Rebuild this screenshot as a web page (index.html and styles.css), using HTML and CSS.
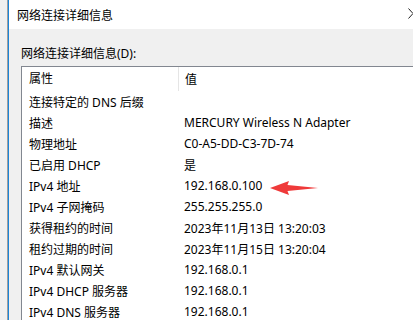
FILE: index.html
```html
<!DOCTYPE html>
<html lang="zh-CN">
<head>
    <meta charset="UTF-8">
    <meta name="viewport" content="width=device-width, initial-scale=1.0">
    <title>网络连接详细信息</title>
    <link rel="stylesheet" href="styles.css">
</head>
<body>
    <div class="side"></div>
    <div class="window">
        <div class="titlebar">
            <span>网络连接详细信息</span>
            <!-- 关闭按钮，只露出一半 -->
            <svg class="close" width="5" height="11" viewBox="0 0 5 11">
                <polyline points="0.5,0.5 5,5.5 0.5,10.5" fill="none" stroke="#222" stroke-width="1"/>
            </svg>
        </div>
        <div class="content">
            <div class="label">网络连接详细信息(D):</div>
            <div class="list">
                <div class="row head">
                    <div class="prop">属性</div>
                    <div class="val">值</div>
                </div>
                <div class="row"><div class="prop">连接特定的 DNS 后缀</div><div class="val"></div></div>
                <div class="row"><div class="prop">描述</div><div class="val">MERCURY Wireless N Adapter</div></div>
                <div class="row"><div class="prop">物理地址</div><div class="val">C0-A5-DD-C3-7D-74</div></div>
                <div class="row"><div class="prop">已启用 DHCP</div><div class="val">是</div></div>
                <div class="row"><div class="prop">IPv4 地址</div><div class="val">192.168.0.100</div></div>
                <div class="row"><div class="prop">IPv4 子网掩码</div><div class="val">255.255.255.0</div></div>
                <div class="row"><div class="prop">获得租约的时间</div><div class="val">2023年11月13日 13:20:03</div></div>
                <div class="row"><div class="prop">租约过期的时间</div><div class="val">2023年11月15日 13:20:04</div></div>
                <div class="row"><div class="prop">IPv4 默认网关</div><div class="val">192.168.0.1</div></div>
                <div class="row"><div class="prop">IPv4 DHCP 服务器</div><div class="val">192.168.0.1</div></div>
                <div class="row"><div class="prop">IPv4 DNS 服务器</div><div class="val">192.168.0.1</div></div>
            </div>
        </div>
    </div>

    <!-- 红色标注箭头 -->
    <svg class="arrow" width="52" height="18" viewBox="0 0 52 18">
        <polygon points="1,9 20,2 18.5,6 49,9 18.5,12 20,16" fill="#ef3a3a"/>
    </svg>
</body>
</html>
```

FILE: styles.css
```css
html, body {
    margin: 0;
    height: 100%;
}

body {
    display: flex;
    width: 413px;
    height: 320px;
    overflow: hidden;
    font-family: 'Noto Sans', 'Noto Sans CJK SC', sans-serif;
    font-size: 12px;
    color: #000;
    position: relative;
}

.side {
    width: 7px;
    background-color: #f0f0f0;
    border-right: 1px solid #a0a0a0;
    flex-shrink: 0;
}

.window {
    flex: 1;
    display: flex;
    flex-direction: column;
    border-left: 1px solid #1a85d9;
    min-width: 0;
}

.titlebar {
    height: 29px;
    background-color: #fff;
    display: flex;
    align-items: center;
    justify-content: space-between;
    padding-left: 8px;
    flex-shrink: 0;
}

.close {
    margin-top: -2px;
}

.content {
    flex: 1;
    background-color: #f0f0f0;
    padding: 17px 0 0 12px;
    display: flex;
    flex-direction: column;
}

.label {
    line-height: 16px;
}

.list {
    flex: 1;
    margin-top: 4px;
    background-color: #fff;
    border: 1px solid #828790;
    border-right: none;
    border-bottom: none;
}

.row {
    display: flex;
    height: 21px;
    align-items: center;
}

.row.head {
    height: 24px;
}

.prop {
    width: 149px;
    padding-left: 7px;
    white-space: nowrap;
}

.head .prop {
    height: 24px;
    line-height: 24px;
    border-right: 1px solid #e5e5e5;
}

.val {
    padding-left: 6px;
    white-space: nowrap;
}

.arrow {
    position: absolute;
    left: 269px;
    top: 179px;
}
```
